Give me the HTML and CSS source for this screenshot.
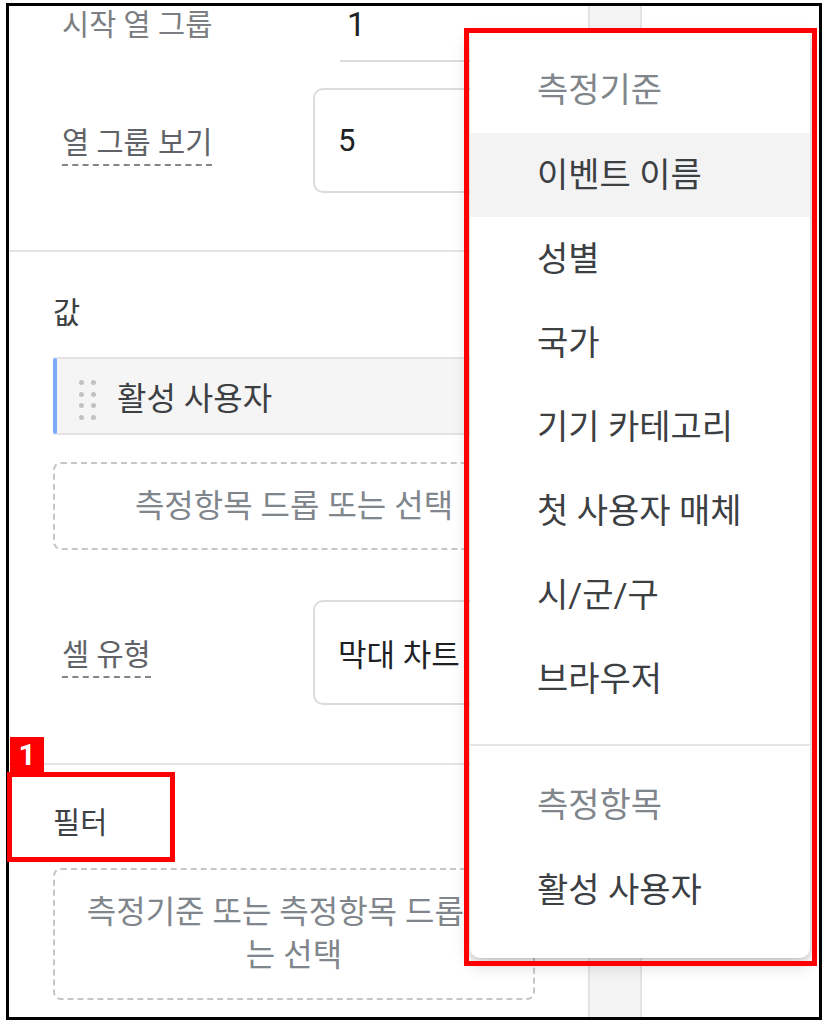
FILE: index.html
```html
<!DOCTYPE html>
<html lang="ko">
<head>
<meta charset="utf-8">
<title>표 설정</title>
<link rel="stylesheet" href="styles.css">
</head>
<body>
<div class="frame">
  <div class="panel">
    <div class="section section-first">
      <div class="row row-first">
        <span class="label label-plain">시작 열 그룹</span>
        <div class="field-line">1</div>
      </div>
      <div class="row">
        <span class="label">열 그룹 보기</span>
        <div class="field-box">5</div>
      </div>
    </div>
    <div class="section section-values">
      <div class="heading">값</div>
      <div class="chip">
        <svg class="grip" width="18" height="48" viewBox="0 0 18 48">
          <circle cx="2.5" cy="10.5" r="2.5"/><circle cx="14.5" cy="10.5" r="2.5"/>
          <circle cx="2.5" cy="22.5" r="2.5"/><circle cx="14.5" cy="22.5" r="2.5"/>
          <circle cx="2.5" cy="33.5" r="2.5"/><circle cx="14.5" cy="33.5" r="2.5"/>
          <circle cx="2.5" cy="45.5" r="2.5"/><circle cx="14.5" cy="45.5" r="2.5"/>
        </svg>
        <span>활성 사용자</span>
      </div>
      <div class="dropzone">측정항목 드롭 또는 선택</div>
      <div class="row row-cell">
        <span class="label">셀 유형</span>
        <div class="field-box">막대 차트</div>
      </div>
    </div>
    <div class="section section-filter">
      <div class="heading">필터</div>
      <div class="dropzone dropzone-tall">측정기준 또는 측정항목 드롭 또는 선택</div>
    </div>
  </div>
  <div class="gutter"></div>
  <div class="rest"></div>

  <div class="menu">
    <div class="menu-item menu-head">측정기준</div>
    <div class="menu-item active">이벤트 이름</div>
    <div class="menu-item">성별</div>
    <div class="menu-item">국가</div>
    <div class="menu-item">기기 카테고리</div>
    <div class="menu-item">첫 사용자 매체</div>
    <div class="menu-item">시/군/구</div>
    <div class="menu-item">브라우저</div>
    <div class="menu-sep"></div>
    <div class="menu-item menu-head">측정항목</div>
    <div class="menu-item">활성 사용자</div>
  </div>
  <div class="mark mark-menu"></div>
  <div class="badge">1</div>
  <div class="mark mark-filter"></div>
</div>
</body>
</html>
```

FILE: styles.css
```css
html { background: #fff; }
body { margin: 0; font-family: Roboto, "Noto Sans CJK KR", sans-serif; color: #202124; }

.frame { position: relative; display: flex; box-sizing: border-box; width: 816px; height: 1017px; margin: 3px 0 0 6px; border: 3px solid #000; background: #fff; }

/* left settings panel */
.panel { flex: none; width: 579px; }
.section { padding: 0 53px 57px 44px; border-bottom: 2px solid #e4e4e4; }
.section-values { padding-top: 44px; padding-bottom: 58px; }
.section-filter { padding-top: 41px; padding-bottom: 0; border-bottom: 0; }

.row { display: flex; align-items: flex-start; padding-left: 9px; margin-top: 26px; }
.row-first { margin-top: 0; }
.row-cell { margin-top: 50px; }

.label { flex: none; width: 251px; margin-top: 38px; font-size: 29.5px; line-height: 34px; color: #5f6368; }
.row .label:not(.label-plain) { width: auto; margin-right: auto; padding-bottom: 4px; border-bottom: 2px dashed #80868b; }
.label-plain { margin-top: 0; line-height: 38px; color: #7b7e82; }

.field-line { flex: 1; margin-left: 27px; padding: 0 0 16px 7px; font-size: 33px; line-height: 38px; border-bottom: 2px solid #dcdcdc; }
.field-box { flex: none; width: 222px; box-sizing: border-box; height: 105px; display: flex; align-items: center; padding-left: 23px; border: 2px solid #dadce0; border-radius: 10px; font-size: 31px; }

.heading { font-size: 29.5px; line-height: 34px; color: #3c4043; }

.chip { display: flex; align-items: center; box-sizing: border-box; height: 78px; margin-top: 27px; padding-left: 22px; background: #f5f5f5; border: 2px solid #e3e3e3; border-left: 4px solid #7baaf7; border-radius: 4px; font-size: 32px; color: #3c4043; }
.grip { flex: none; margin-right: 20px; fill: #c2c2c2; }

.dropzone { display: flex; align-items: center; justify-content: center; box-sizing: border-box; height: 88px; margin-top: 27px; padding: 0 22px; border: 2px dashed #c6c6c6; border-radius: 8px; font-size: 32px; line-height: 43px; color: #80868b; text-align: center; }
.dropzone-tall { height: 132px; margin-top: 28px; word-break: break-all; }

.gutter { flex: none; width: 54px; box-sizing: border-box; background: #f4f4f4; border-left: 2px solid #e3e3e3; border-right: 2px solid #e3e3e3; }
.rest { flex: 1; }

/* dimension picker menu */
.menu { position: absolute; left: 461px; top: 27px; width: 340px; height: 925px; box-sizing: border-box; padding-top: 16px; background: #fff; border-radius: 0 0 10px 10px; box-shadow: 0 6px 18px rgba(0,0,0,.2), 0 1px 4px rgba(0,0,0,.12); }
.menu-item { display: flex; align-items: center; box-sizing: border-box; height: 84px; padding: 0 0 5px 67px; font-size: 34px; color: #3c4043; }
.menu-item.active { background: #f3f3f3; }
.menu-head { color: #80868b; padding-bottom: 8px; }
.menu-sep { height: 2px; margin: 23px 0 18px; background: #e6e6e6; }

/* red annotations */
.mark { position: absolute; box-sizing: border-box; border: 5px solid #f00; }
.mark-menu { left: 455px; top: 22px; width: 353px; height: 938px; }
.mark-filter { left: -2px; top: 766px; width: 168px; height: 90px; }
.badge { position: absolute; left: 1px; top: 731px; width: 34px; height: 35px; background: #f00; color: #fff; font-size: 30px; font-weight: 700; line-height: 35px; text-align: center; }
```
